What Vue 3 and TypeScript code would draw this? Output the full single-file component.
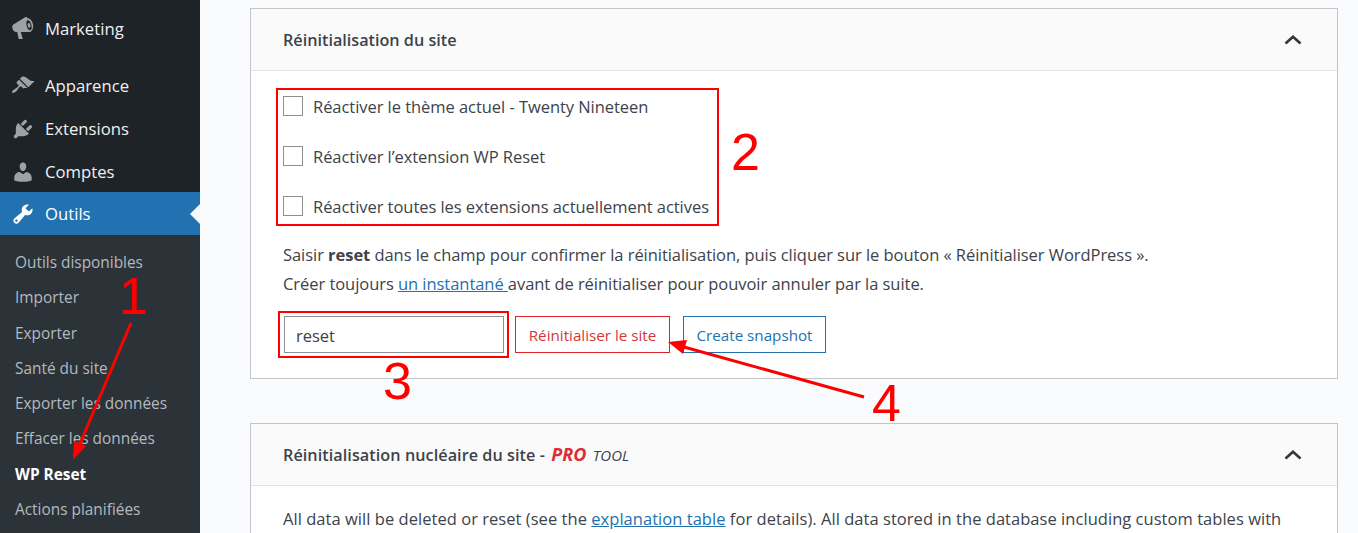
<script setup lang="ts">
const menuTop = ['Apparence', 'Extensions', 'Comptes'];
const subItems = [
  'Outils disponibles',
  'Importer',
  'Exporter',
  'Santé du site',
  'Exporter les données',
  'Effacer les données',
  'WP Reset',
  'Actions planifiées',
];
const options = [
  'Réactiver le thème actuel - Twenty Nineteen',
  'Réactiver l’extension WP Reset',
  'Réactiver toutes les extensions actuellement actives',
];
const iconPaths: Record<string, string> = {
  Apparence:
    'M14.480 11.060L7.410 3.990l1.500-1.500c.5-.56 2.300-.47 3.510.32 1.210.8 1.430 1.280 2.910 2.100 1.180.64 2.450 1.260 4.450.85zm-.71.71L6.700 4.700 4.930 6.470c-.39.39-.39 1.020 0 1.410l1.060 1.060c.39.39.39 1.030 0 1.420-.6.6-1.430 1.110-2.210 1.690-.35.26-.7.53-1.010.84C1.430 13.230.4 14.850 1.100 15.550s2.330-.32 3.670-1.670c.31-.31.58-.66.84-1.010.58-.78 1.090-1.610 1.690-2.210.39-.39 1.030-.39 1.420 0l1.060 1.060c.39.39 1.020.39 1.410 0z',
  Extensions:
    'M13.110 4.360L9.870 7.600 8 5.730l3.240-3.240c.35-.34 1.050-.2 1.560.32.52.51.66 1.210.31 1.550zm-8 1.770l.91-1.120 9.010 9.010-1.190.84c-.71.71-2.630 1.160-3.820 1.160H6.140L4.900 17.260c-.59.59-1.540.59-2.120 0-.59-.58-.59-1.530 0-2.120l1.240-1.240v-3.880c0-1.130.4-3.190 1.090-3.890zm7.260 3.970l3.240-3.240c.34-.35 1.040-.21 1.550.31.52.51.66 1.210.31 1.550l-3.240 3.250z',
  Comptes:
    'M10 9.250c-2.270 0-2.730-3.440-2.730-3.440C7 4.020 7.820 2 9.970 2c2.160 0 2.980 2.020 2.710 3.810 0 0-.41 3.440-2.680 3.440zm0 2.570L12.720 10c2.390 0 4.520 2.330 4.520 4.530v2.490s-3.650 1.130-7.240 1.130c-3.650 0-7.240-1.130-7.240-1.130v-2.490c0-2.250 1.940-4.480 4.470-4.480z',
};
</script>

<template>
  <div class="page">
    <aside class="sidebar">
      <a class="menu-item first">
        <svg class="menu-icon" viewBox="0 0 20 20">
          <path fill-rule="evenodd" d="M13.500 1.100c2.100-.5 4 1.900 4.700 4.500.7 2.700.1 5.700-1.900 6.600-.4.2-.9.2-1.300.2H8.200l1.500 5.300c.1.3-.2.600-.5.600H6.800c-.3 0-.5-.2-.6-.5l-1-5.400H4c-1.200 0-2.400-1.200-2.800-2.800-.4-1.500 0-3 1.100-3.500l9.500-5.800c.5-.3.600-.6 1.700-.7zm.500 1.700c-1.300.3-1.500 2.500-.9 4.700.6 2.200 1.700 3.800 3 3.400 1.100-.3 1.400-2.300.8-4.500-.6-2.200-1.800-3.900-2.900-3.600zm.6 2.300c.7-.2 1.300.6 1.500 1.600.3 1 .1 2-.6 2.200-.7.2-1.300-.6-1.500-1.600-.3-1-.1-2 .6-2.200z" />
        </svg>
        <span>Marketing</span>
      </a>
      <div class="menu-sep"></div>
      <a v-for="item in menuTop" :key="item" class="menu-item">
        <svg class="menu-icon" viewBox="0 0 20 20"><path :d="iconPaths[item]" /></svg>
        <span>{{ item }}</span>
      </a>
      <a class="menu-item current">
        <svg class="menu-icon" viewBox="0 0 20 20">
          <path d="M16.680 9.770c-1.340 1.340-3.300 1.670-4.950.99l-5.410 6.520c-.99.99-2.590.99-3.580 0s-.99-2.590 0-3.570l6.520-5.420c-.68-1.650-.35-3.610.99-4.950 1.280-1.280 3.120-1.620 4.720-1.060l-2.890 2.890 2.820 2.820 2.860-2.870c.53 1.580.18 3.390-1.080 4.650zM3.810 16.210c.4.39 1.040.39 1.430 0 .4-.4.4-1.040 0-1.430-.39-.4-1.030-.4-1.430 0-.39.39-.39 1.030 0 1.430z" />
        </svg>
        <span>Outils</span>
        <i class="current-arrow"></i>
      </a>
      <ul class="submenu">
        <li v-for="item in subItems" :key="item" :class="{ active: item === 'WP Reset' }">{{ item }}</li>
      </ul>
    </aside>

    <main class="content">
      <section class="card first-card">
        <header class="card-head">
          <h3>Réinitialisation du site</h3>
          <svg class="chevron" viewBox="0 0 18 10"><path d="M1.500 8.500L9 1.800l7.500 6.700" /></svg>
        </header>
        <div class="card-body">
          <label v-for="opt in options" :key="opt" class="check-row">
            <span class="checkbox"></span>
            <span>{{ opt }}</span>
          </label>
          <p class="confirm-text">
            Saisir <b>reset</b> dans le champ pour confirmer la réinitialisation, puis cliquer sur le bouton « Réinitialiser WordPress ».<br />
            Créer toujours <a class="link">un instantané </a>avant de réinitialiser pour pouvoir annuler par la suite.
          </p>
          <div class="actions">
            <div class="reset-input">reset</div>
            <button type="button" class="btn btn-red">Réinitialiser le site</button>
            <button type="button" class="btn btn-blue">Create snapshot</button>
          </div>
        </div>
      </section>

      <section class="card">
        <header class="card-head">
          <h3 class="pro-title">Réinitialisation nucléaire du site - <em class="pro">PRO</em> <small class="tool">tool</small></h3>
          <svg class="chevron" viewBox="0 0 18 10"><path d="M1.500 8.500L9 1.800l7.500 6.700" /></svg>
        </header>
        <div class="card-body second-body">
          <p>All data will be deleted or reset (see the <a class="link">explanation table</a> for details). All data stored in the database including custom tables with</p>
        </div>
      </section>
    </main>

    <!-- annotations drawn over the screenshot -->
    <div class="notes">
      <span class="note-box box-options"></span>
      <span class="note-box box-input"></span>
      <span class="num num-1">1</span>
      <span class="num num-2">2</span>
      <span class="num num-3">3</span>
      <span class="num num-4">4</span>
      <svg class="arrows" viewBox="0 0 1358 533">
        <line x1="131" y1="323" x2="79" y2="446" />
        <polygon points="73,460 86,446 74,441" />
        <line x1="864" y1="397" x2="684" y2="347" />
        <polygon points="668,342 687,340 683,354" />
      </svg>
    </div>
  </div>
</template>

<style>
html,
body {
  margin: 0;
  height: 533px;
  overflow: hidden;
  background: #fafbfd;
}
</style>

<style scoped>
.page {
  display: flex;
  position: relative;
  height: 533px;
  overflow: hidden;
  font-family: 'Open Sans', 'Noto Sans', sans-serif;
  color: #3c434a;
}

.sidebar {
  width: 200px;
  flex: none;
  background: #1d2327;
  padding-top: 8px;
  box-sizing: border-box;
}

.menu-item {
  display: flex;
  align-items: center;
  height: 43px;
  padding-left: 11px;
  box-sizing: border-box;
  position: relative;
  color: #f0f0f1;
  font-size: 16.7px;
}

.menu-item span {
  margin-left: 10px;
}

.menu-item.first {
  height: 41px;
}

.menu-sep {
  height: 15px;
}

.menu-icon {
  width: 24px;
  height: 24px;
  flex: none;
  fill: #9ca2a7;
}

.current {
  margin-top: -1px;
  background: #2271b1;
  color: #fff;
}

.current .menu-icon {
  fill: #fff;
}

.current-arrow {
  position: absolute;
  right: 0;
  top: 12px;
  border: 10px solid transparent;
  border-right-color: #f6f7fb;
  border-left-width: 0;
}

.submenu {
  list-style: none;
  margin: 0;
  padding: 10px 0 0;
  background: #2c3338;
  height: 300px;
  box-sizing: border-box;
}

.submenu li {
  height: 35.25px;
  line-height: 35.25px;
  padding-left: 15px;
  font-size: 15.4px;
  color: #b4b9be;
  white-space: nowrap;
}

.submenu .active {
  color: #fff;
  font-weight: 700;
}

.content {
  flex: 1;
  padding: 8px 20px 0 50px;
  min-width: 0;
}

.card {
  background: #fff;
  border: 1px solid #c3c4c7;
}

.first-card {
  margin-bottom: 44px;
}

.card-head {
  height: 61px;
  display: flex;
  align-items: center;
  justify-content: space-between;
  padding: 0 35px 0 32px;
  background: #fafafa;
  border-bottom: 1px solid #e2e4e7;
}

.card-head h3 {
  margin: 0;
  font-size: 16.2px;
  font-weight: 600;
  color: #3c434a;
}

.card-head .pro-title {
  line-height: 20px;
  letter-spacing: 0.06px;
  margin-top: -1px;
}

.chevron {
  width: 18px;
  height: 10px;
  fill: none;
  stroke: #32373c;
  stroke-width: 2.6;
}

.card-body {
  padding: 10px 32px 0;
  font-size: 16.5px;
  letter-spacing: -0.05px;
  height: 307px;
  box-sizing: border-box;
}

.second-body {
  height: 60px;
  padding-top: 21px;
  letter-spacing: 0.04px;
}

.second-body p {
  margin: 0;
  white-space: nowrap;
}

.check-row {
  display: flex;
  align-items: center;
  gap: 10px;
  height: 50px;
}

.checkbox {
  width: 18px;
  height: 18px;
  border: 1px solid #8c8f94;
  background: #fff;
  flex: none;
}

.confirm-text {
  margin: 9px 0 0;
  line-height: 29px;
  white-space: nowrap;
}

.link {
  color: #2271b1;
  text-decoration: underline;
}

.actions {
  display: flex;
  align-items: center;
  margin-top: 18px;
}

.reset-input {
  height: 35px;
  width: 207px;
  margin-left: 1px;
  margin-right: 11px;
  padding-left: 11px;
  border: 1px solid #8c8f94;
  line-height: 38px;
  box-sizing: content-box;
}

.btn {
  height: 37px;
  background: #fff;
  font-family: inherit;
  font-size: 15.2px;
  border: 1px solid;
  padding: 0;
}

.btn-red {
  width: 155px;
  color: #d63638;
  border-color: #e0232b;
  margin-right: 13px;
}

.btn-blue {
  width: 143px;
  color: #2271b1;
  border-color: #2271b1;
}

.pro {
  color: #dd2c35;
  font-weight: 700;
  font-size: 18px;
  margin-left: 2px;
}

.tool {
  font-size: 15px;
  font-weight: 400;
  font-style: italic;
  font-variant: small-caps;
  text-transform: uppercase;
  margin-left: 2px;
}

.notes {
  position: absolute;
  inset: 0;
  pointer-events: none;
}

.note-box {
  position: absolute;
  border: 2px solid #f00;
  box-sizing: border-box;
}

.box-options {
  left: 276px;
  top: 88px;
  width: 443px;
  height: 138px;
}

.box-input {
  left: 278px;
  top: 311px;
  width: 231px;
  height: 47px;
}

.num {
  position: absolute;
  color: #f00;
  font-family: 'Liberation Sans', Arial, sans-serif;
  font-size: 52px;
  line-height: 52px;
}

.num-1 { left: 119px; top: 270px; }
.num-2 { left: 731px; top: 126px; }
.num-3 { left: 383px; top: 355px; }
.num-4 { left: 872px; top: 377px; }

.arrows {
  position: absolute;
  inset: 0;
  width: 1358px;
  height: 533px;
  fill: #f00;
  stroke: none;
}

.arrows line {
  stroke: #f00;
  stroke-width: 3;
}
</style>
